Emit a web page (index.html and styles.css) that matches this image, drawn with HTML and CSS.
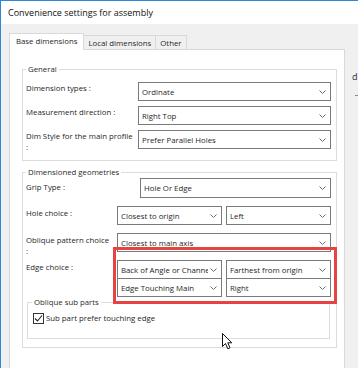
FILE: index.html
```html
<!DOCTYPE html>
<html lang="en">
<head>
    <meta charset="UTF-8">
    <meta name="viewport" content="width=device-width, initial-scale=1.0">
    <title>Convenience settings for assembly</title>
    <link rel="stylesheet" href="styles.css">
</head>
<body>
    <div class="window">
        <div class="titlebar">Convenience settings for assembly</div>
        <div class="client">
            <div class="tabs">
                <div class="tab active">Base dimensions</div>
                <div class="tab">Local dimensions</div>
                <div class="tab">Other</div>
            </div>

            <div class="panel">
                <fieldset class="group general">
                    <legend>General</legend>
                    <div class="row">
                        <div class="label wide">Dimension types :</div>
                        <div class="combo"><span>Ordinate</span><svg width="7" height="4" viewBox="0 0 7 4"><polyline points="0.5,0.5 3.5,3.5 6.5,0.5"/></svg></div>
                    </div>
                    <div class="row">
                        <div class="label wide">Measurement direction :</div>
                        <div class="combo"><span>Right Top</span><svg width="7" height="4" viewBox="0 0 7 4"><polyline points="0.5,0.5 3.5,3.5 6.5,0.5"/></svg></div>
                    </div>
                    <div class="row">
                        <div class="label wide">Dim Style for the main profile<br>:</div>
                        <div class="combo"><span>Prefer Parallel Holes</span><svg width="7" height="4" viewBox="0 0 7 4"><polyline points="0.5,0.5 3.5,3.5 6.5,0.5"/></svg></div>
                    </div>
                </fieldset>

                <fieldset class="group dims">
                    <legend>Dimensioned geometries</legend>
                    <div class="row grip">
                        <div class="label wider">Grip Type :</div>
                        <div class="combo"><span>Hole Or Edge</span><svg width="7" height="4" viewBox="0 0 7 4"><polyline points="0.5,0.5 3.5,3.5 6.5,0.5"/></svg></div>
                    </div>
                    <div class="row">
                        <div class="label">Hole choice :</div>
                        <div class="pair">
                            <div class="combo"><span>Closest to origin</span><svg width="7" height="4" viewBox="0 0 7 4"><polyline points="0.5,0.5 3.5,3.5 6.5,0.5"/></svg></div>
                            <div class="combo"><span>Left</span><svg width="7" height="4" viewBox="0 0 7 4"><polyline points="0.5,0.5 3.5,3.5 6.5,0.5"/></svg></div>
                        </div>
                    </div>
                    <div class="row">
                        <div class="label">Oblique pattern choice<br>:</div>
                        <div class="combo"><span>Closest to main axis</span><svg width="7" height="4" viewBox="0 0 7 4"><polyline points="0.5,0.5 3.5,3.5 6.5,0.5"/></svg></div>
                    </div>
                    <div class="row edge">
                        <div class="label">Edge choice :</div>
                        <div class="pair">
                            <div class="combo"><span>Back of Angle or Channel</span><svg width="7" height="4" viewBox="0 0 7 4"><polyline points="0.5,0.5 3.5,3.5 6.5,0.5"/></svg></div>
                            <div class="combo"><span>Farthest from origin</span><svg width="7" height="4" viewBox="0 0 7 4"><polyline points="0.5,0.5 3.5,3.5 6.5,0.5"/></svg></div>
                            <div class="combo"><span>Edge Touching Main</span><svg width="7" height="4" viewBox="0 0 7 4"><polyline points="0.5,0.5 3.5,3.5 6.5,0.5"/></svg></div>
                            <div class="combo"><span>Right</span><svg width="7" height="4" viewBox="0 0 7 4"><polyline points="0.5,0.5 3.5,3.5 6.5,0.5"/></svg></div>
                        </div>
                    </div>

                    <fieldset class="group sub">
                        <legend>Oblique sub parts</legend>
                        <label class="check">
                            <span class="box"><svg width="9" height="9" viewBox="0 0 9 9"><polyline points="1,4.5 3.5,7 8,1.5"/></svg></span>
                            Sub part prefer touching edge
                        </label>
                    </fieldset>
                </fieldset>

                <!-- annotation drawn over the screenshot -->
                <div class="highlight"></div>
                <svg class="cursor" width="12" height="17" viewBox="0 0 12 17">
                    <path d="M0.5,0.5 L0.5,13.5 L3.5,10.5 L5.8,15.8 L8,14.8 L5.8,9.8 L9.8,9.8 Z"/>
                </svg>
            </div>
        </div>
    </div>

    <!-- bits of the window behind -->
    <span class="behind">d</span>
    <span class="behind-dash"></span>
</body>
</html>
```

FILE: styles.css
```css
body {
    margin: 0;
    width: 358px;
    height: 368px;
    overflow: hidden;
    position: relative;
    font-family: 'Open Sans', sans-serif;
    font-size: 7.8px;
    color: #262626;
    background: #fff;
}

.window {
    height: 368px;
    box-sizing: border-box;
    border-top: 1px solid #2b88d8;
    border-left: 1px solid #2b88d8;
    display: flex;
    flex-direction: column;
}

.titlebar {
    height: 23px;
    line-height: 23px;
    padding-left: 7px;
    font-size: 9px;
    color: #111;
    background: #fff;
}

.client {
    flex: 1;
    min-height: 0;
    display: flex;
    flex-direction: column;
    background: #f0f0f0;
    padding-top: 9px;
}

/* tab strip */
.tabs {
    display: flex;
    align-items: flex-end;
    height: 17px;
    padding-left: 8px;
}

.tab {
    height: 15px;
    box-sizing: border-box;
    border: 1px solid #d9d9d9;
    border-bottom: 0;
    margin-left: -1px;
    padding: 0 4px;
    line-height: 14px;
    background: #f0f0f0;
    white-space: nowrap;
}

.tab.active {
    height: 17px;
    margin-left: 0;
    padding: 0 6px;
    line-height: 15px;
    background: #fff;
    position: relative;
    z-index: 1;
}

.panel {
    flex: 1;
    min-height: 0;
    position: relative;
    width: 336px;
    box-sizing: border-box;
    margin: -1px 0 0 8px;
    padding: 13px 7px 0 12px;
    border: 1px solid #d9d9d9;
    border-bottom: 0;
    background: #fff;
}

/* group boxes */
.group {
    margin: 0;
    min-width: 0;
    border: 1px solid #dcdcdc;
    padding: 0 5px 6px 3px;
}

.group legend {
    padding: 0 2px;
    line-height: 12px;
    color: #2a2a2a;
}

.general {
    padding-top: 7px;
    margin-bottom: 5px;
}

.dims {
    padding-bottom: 8px;
}

.row {
    display: flex;
    height: 19px;
    margin-bottom: 5px;
}

.dims .row {
    margin-bottom: 8px;
}

.dims .row.grip {
    height: 20px;
}

.dims .row.edge {
    height: auto;
    margin-bottom: 0;
}

.label {
    flex: none;
    width: 91px;
    padding-top: 1px;
    line-height: 10.5px;
    white-space: nowrap;
}

.label.wide {
    width: 112px;
}

.label.wider {
    width: 114px;
}

.dims .label {
    padding-top: 2px;
}

.dims .grip .label {
    padding-top: 4px;
}

.combo {
    flex: 1;
    min-width: 0;
    height: 19px;
    box-sizing: border-box;
    display: flex;
    align-items: center;
    gap: 2px;
    padding: 0 4px 0 3px;
    border: 1px solid #7a7a7a;
    background: #fff;
    white-space: nowrap;
}

.grip .combo {
    height: 20px;
}

.combo span {
    flex: 1;
    min-width: 0;
    overflow: hidden;
    text-overflow: clip;
}

.combo svg {
    flex: none;
    fill: none;
    stroke: #6a6a6a;
    stroke-width: 1;
}

.pair {
    flex: 1;
    display: grid;
    grid-template-columns: 1fr 1fr;
    column-gap: 4px;
}

.edge .pair .combo:nth-child(n+3) {
    margin-top: -1px;
}

.sub {
    margin: -1px 1px 0 1px;
    padding: 4px 5px 14px 5px;
}

.sub legend {
    margin-left: -1px;
}

.check {
    display: flex;
    align-items: center;
    gap: 2px;
    height: 12px;
}

.box {
    width: 11px;
    height: 11px;
    box-sizing: border-box;
    border: 1px solid #333;
    background: #fff;
    display: flex;
    align-items: center;
    justify-content: center;
}

.box svg {
    fill: none;
    stroke: #222;
    stroke-width: 1.1;
}

/* red annotation frame */
.highlight {
    position: absolute;
    left: 103px;
    top: 197px;
    width: 224px;
    height: 57px;
    box-sizing: border-box;
    border: 3px solid #e84343;
}

.cursor {
    position: absolute;
    left: 212px;
    top: 283px;
    fill: #fff;
    stroke: #111;
    stroke-width: 1;
}

.behind {
    position: absolute;
    left: 352px;
    top: 71px;
    font-size: 9px;
    line-height: 12px;
    color: #1c2a48;
}

.behind-dash {
    position: absolute;
    left: 355px;
    top: 95px;
    width: 3px;
    height: 1px;
    background: #8a8a8a;
}
```
